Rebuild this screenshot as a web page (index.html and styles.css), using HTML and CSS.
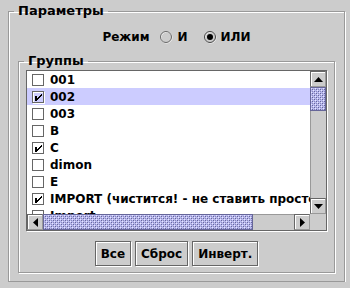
FILE: index.html
```html
<!DOCTYPE html>
<html lang="ru">
<head>
    <meta charset="UTF-8">
    <meta name="viewport" content="width=device-width, initial-scale=1.0">
    <title>Параметры</title>
    <link rel="stylesheet" href="styles.css">
</head>
<body>

    <fieldset class="params">
        <legend>Параметры</legend>

        <div class="mode">
            <span class="mode-label">Режим</span>
            <span class="radio">
                <svg class="radio-icon" width="13" height="13" viewBox="0 0 13 13">
                    <circle cx="6.5" cy="6.5" r="5.5" fill="none" stroke="#fff"/>
                    <circle cx="6" cy="6" r="5.5" fill="none" stroke="#666"/>
                </svg>
                И
            </span>
            <span class="radio">
                <svg class="radio-icon" width="13" height="13" viewBox="0 0 13 13">
                    <circle cx="6.5" cy="6.5" r="5.5" fill="none" stroke="#fff"/>
                    <circle cx="6" cy="6" r="5.5" fill="none" stroke="#444"/>
                    <circle cx="6" cy="6" r="3" fill="#000"/>
                </svg>
                ИЛИ
            </span>
        </div>

        <fieldset class="groups">
            <legend>Группы</legend>

            <div class="scroll-pane">
                <div class="viewport">
                    <div class="row"><span class="check"></span>001</div>
                    <div class="row selected"><span class="check"><svg width="11" height="11" viewBox="1 1 11 11" shape-rendering="crispEdges"><path d="M3 5h2v5H3z M9 3h1v2H9z M8 4h1v2H8z M7 5h1v2H7z M6 6h1v2H6z M5 7h1v2H5z"/></svg></span>002</div>
                    <div class="row"><span class="check"></span>003</div>
                    <div class="row"><span class="check"></span>B</div>
                    <div class="row"><span class="check"><svg width="11" height="11" viewBox="1 1 11 11" shape-rendering="crispEdges"><path d="M3 5h2v5H3z M9 3h1v2H9z M8 4h1v2H8z M7 5h1v2H7z M6 6h1v2H6z M5 7h1v2H5z"/></svg></span>C</div>
                    <div class="row"><span class="check"></span>dimon</div>
                    <div class="row"><span class="check"></span>E</div>
                    <div class="row"><span class="check"><svg width="11" height="11" viewBox="1 1 11 11" shape-rendering="crispEdges"><path d="M3 5h2v5H3z M9 3h1v2H9z M8 4h1v2H8z M7 5h1v2H7z M6 6h1v2H6z M5 7h1v2H5z"/></svg></span>IMPORT (чистится! - не ставить просто так)</div>
                    <div class="row"><span class="check"></span>Import</div>
                </div>

                <div class="vbar">
                    <div class="arrow-btn">
                        <svg width="9" height="5" viewBox="0 0 9 5"><path d="M4.5 0L9 5H0z"/></svg>
                    </div>
                    <div class="thumb vthumb">
                        <svg width="100%" height="100%"><rect width="100%" height="100%" fill="url(#bumps)"/></svg>
                    </div>
                    <div class="track vtrack"></div>
                    <div class="arrow-btn">
                        <svg width="9" height="5" viewBox="0 0 9 5"><path d="M0 0H9L4.5 5z"/></svg>
                    </div>
                </div>

                <div class="hbar">
                    <div class="arrow-btn">
                        <svg width="5" height="9" viewBox="0 0 5 9"><path d="M5 0V9L0 4.5z"/></svg>
                    </div>
                    <div class="thumb hthumb">
                        <svg width="100%" height="100%"><rect width="100%" height="100%" fill="url(#bumps)"/></svg>
                    </div>
                    <div class="track htrack"></div>
                    <div class="arrow-btn">
                        <svg width="5" height="9" viewBox="0 0 5 9"><path d="M0 0V9L5 4.5z"/></svg>
                    </div>
                </div>

                <div class="corner"></div>
            </div>

            <div class="buttons">
                <button>Все</button>
                <button>Сброс</button>
                <button>Инверт.</button>
            </div>
        </fieldset>
    </fieldset>

    <!-- узор "шишечек" для ползунков -->
    <svg class="defs" width="0" height="0">
        <defs>
            <pattern id="bumps" width="4" height="4" patternUnits="userSpaceOnUse">
                <rect width="4" height="4" fill="#b8b8ee"/>
                <rect x="0" y="0" width="1" height="1" fill="#e6e6ff"/>
                <rect x="2" y="2" width="1" height="1" fill="#e6e6ff"/>
                <rect x="1" y="1" width="1" height="1" fill="#666699"/>
                <rect x="3" y="3" width="1" height="1" fill="#666699"/>
                <rect x="3" y="1" width="1" height="1" fill="#8888bb"/>
                <rect x="1" y="3" width="1" height="1" fill="#8888bb"/>
            </pattern>
        </defs>
    </svg>

</body>
</html>
```

FILE: styles.css
```css
body {
    margin: 0;
    padding: 3px 0 0 8px;
    background-color: #cccccc;
    font-family: "DejaVu Sans", sans-serif;
    font-size: 12px;
    font-weight: bold;
    color: #000;
}
fieldset {
    margin: 0;
    box-sizing: border-box;
    border: 1px solid #999999;
    box-shadow: inset 1px 1px 0 #fff, 1px 1px 0 #fff;
}
legend {
    font-size: 13px;
    line-height: 16px;
    padding: 0 4px;
}
.params {
    width: 337px;
    height: 279px;
    padding: 0 9px 9px 9px;
}
.params > legend {
    margin-left: -4px;
}
.mode {
    display: flex;
    align-items: center;
    justify-content: center;
    height: 20px;
    margin: 8px 0 6px;
}
.mode-label {
    margin-right: 11px;
}
.radio {
    display: flex;
    align-items: center;
    gap: 4px;
}
.radio + .radio {
    margin-left: 16px;
}
.groups {
    padding: 0 7px 6px 7px;
}
.groups > legend {
    margin-left: -2px;
}
.scroll-pane {
    display: grid;
    grid-template-columns: 1fr 16px;
    grid-template-rows: 1fr 16px;
    height: 159px;
    margin-top: 1px;
    border: 1px solid #666;
    box-shadow: 1px 1px 0 #fff;
    background-color: #cccccc;
}
.viewport {
    overflow: hidden;
    background-color: #fff;
    white-space: nowrap;
}
.row {
    display: flex;
    align-items: center;
    height: 17px;
    padding-left: 5px;
}
.row.selected {
    background-color: #ccccff;
}
.check {
    flex: none;
    width: 12px;
    height: 12px;
    box-sizing: border-box;
    border: 1px solid #666;
    box-shadow: inset 1px 1px 0 #fff, 1px 1px 0 #fff;
    margin-right: 6px;
}
.check svg {
    display: block;
}
.vbar {
    display: flex;
    flex-direction: column;
}
.hbar {
    display: flex;
}
.arrow-btn {
    flex: none;
    width: 16px;
    height: 16px;
    box-sizing: border-box;
    border: 1px solid #666;
    border-right-color: #999;
    border-bottom-color: #999;
    box-shadow: inset 1px 1px 0 #fff;
    background-color: #cccccc;
    display: flex;
    align-items: center;
    justify-content: center;
}
.arrow-btn svg {
    display: block;
}
.thumb {
    flex: none;
    box-sizing: border-box;
    border: 1px solid #666699;
}
.thumb svg {
    display: block;
}
.vthumb {
    height: 24px;
}
.hthumb {
    width: 210px;
}
.track {
    flex: 1;
    background-color: #cccccc;
}
.vtrack {
    border-left: 1px solid #999;
}
.htrack {
    border-top: 1px solid #999;
}
.corner {
    background-color: #cccccc;
}
.buttons {
    display: flex;
    justify-content: center;
    gap: 4px;
    margin-top: 10px;
}
button {
    font: inherit;
    color: #000;
    height: 25px;
    padding: 0 5px;
    background-color: #cccccc;
    border: 1px solid #666;
    border-radius: 0;
    box-shadow: inset 1px 1px 0 #fff, 1px 1px 0 #fff;
}
.defs {
    position: absolute;
}
```
